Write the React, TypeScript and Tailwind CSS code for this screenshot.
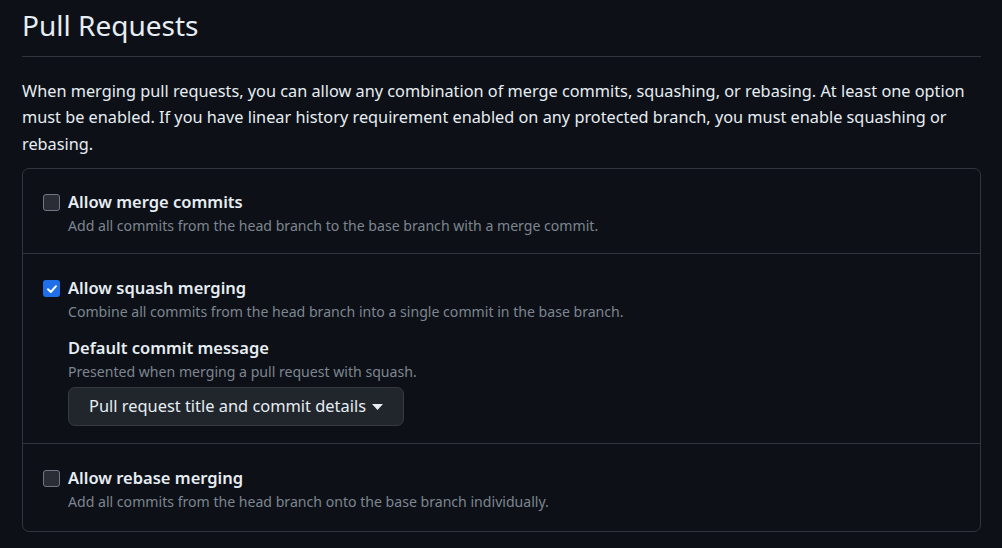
import React from "react";

function Checkbox({ checked }: { checked: boolean }) {
  if (checked) {
    return (
      <span className="mt-[5px] flex h-[17px] w-[17px] shrink-0 items-center justify-center rounded-[3px] bg-[#1f6feb]">
        <svg width="12" height="12" viewBox="0 0 12 12" fill="none">
          <path d="M2 6.3 L4.8 9 L10 3.2" stroke="white" strokeWidth="2" strokeLinecap="round" strokeLinejoin="round" />
        </svg>
      </span>
    );
  }
  return (
    <span className="mt-[5px] block h-[17px] w-[17px] shrink-0 rounded-[3px] border-[1.5px] border-[#6e7681] bg-[#2a2c36]" />
  );
}

function Row({
  checked,
  label,
  desc,
  children,
  className,
}: {
  checked: boolean;
  label: string;
  desc: string;
  children?: React.ReactNode;
  className: string;
}) {
  return (
    <div className={"flex gap-[8px] pl-[20px] pr-4 " + className}>
      <Checkbox checked={checked} />
      <div className="flex flex-col">
        <div className="text-[16.5px] font-semibold leading-[26px] text-[#e6edf3]">{label}</div>
        <div className="text-[14.1px] leading-[22.5px] text-[#7d8590]">{desc}</div>
        {children}
      </div>
    </div>
  );
}

export default function App() {
  return (
    <div
      className="h-[548px] w-[1002px] bg-[#0d1117] pl-[22px] pr-[21px] text-[#e6edf3]"
      style={{ fontFamily: '"Segoe UI", "Noto Sans", "Open Sans", sans-serif' }}
    >
      <div className="border-b border-[#30363d] pt-[3px] pb-[8px]">
        <h2 className="text-[28px] font-normal leading-[45px]">Pull Requests</h2>
      </div>
      <p className="mt-[21px] text-[16.3px] leading-[26.25px]">
        When merging pull requests, you can allow any combination of merge commits, squashing, or rebasing. At least one option
        must be enabled. If you have linear history requirement enabled on any protected branch, you must enable squashing or
        rebasing.
      </p>
      <div className="mt-[11px] rounded-[7px] border border-[#30363d]">
        <Row
          checked={false}
          className="border-b border-[#30363d] pt-[20px] pb-[16px]"
          label="Allow merge commits"
          desc="Add all commits from the head branch to the base branch with a merge commit."
        />
        <Row
          checked={true}
          className="border-b border-[#30363d] pt-[21px] pb-[17px]"
          label="Allow squash merging"
          desc="Combine all commits from the head branch into a single commit in the base branch."
        >
          <div className="mt-[11px] text-[16.5px] font-semibold leading-[26px] text-[#e6edf3]">Default commit message</div>
          <div className="text-[14.1px] leading-[22.5px] text-[#7d8590]">Presented when merging a pull request with squash.</div>
          <div className="mt-[4px]">
            <button className="flex h-[39px] items-center gap-[6px] rounded-[7px] border border-[#363b42] bg-[#21262d] pl-[20px] pr-[20px] text-[16.4px] text-[#e6edf3]">
              <span>Pull request title and commit details</span>
              <svg width="11" height="6" viewBox="0 0 11 6">
                <path d="M0 0 L11 0 L5.5 6 Z" fill="#e6edf3" />
              </svg>
            </button>
          </div>
        </Row>
        <Row
          checked={false}
          className="pt-[21px] pb-[17px]"
          label="Allow rebase merging"
          desc="Add all commits from the head branch onto the base branch individually."
        />
      </div>
    </div>
  );
}
